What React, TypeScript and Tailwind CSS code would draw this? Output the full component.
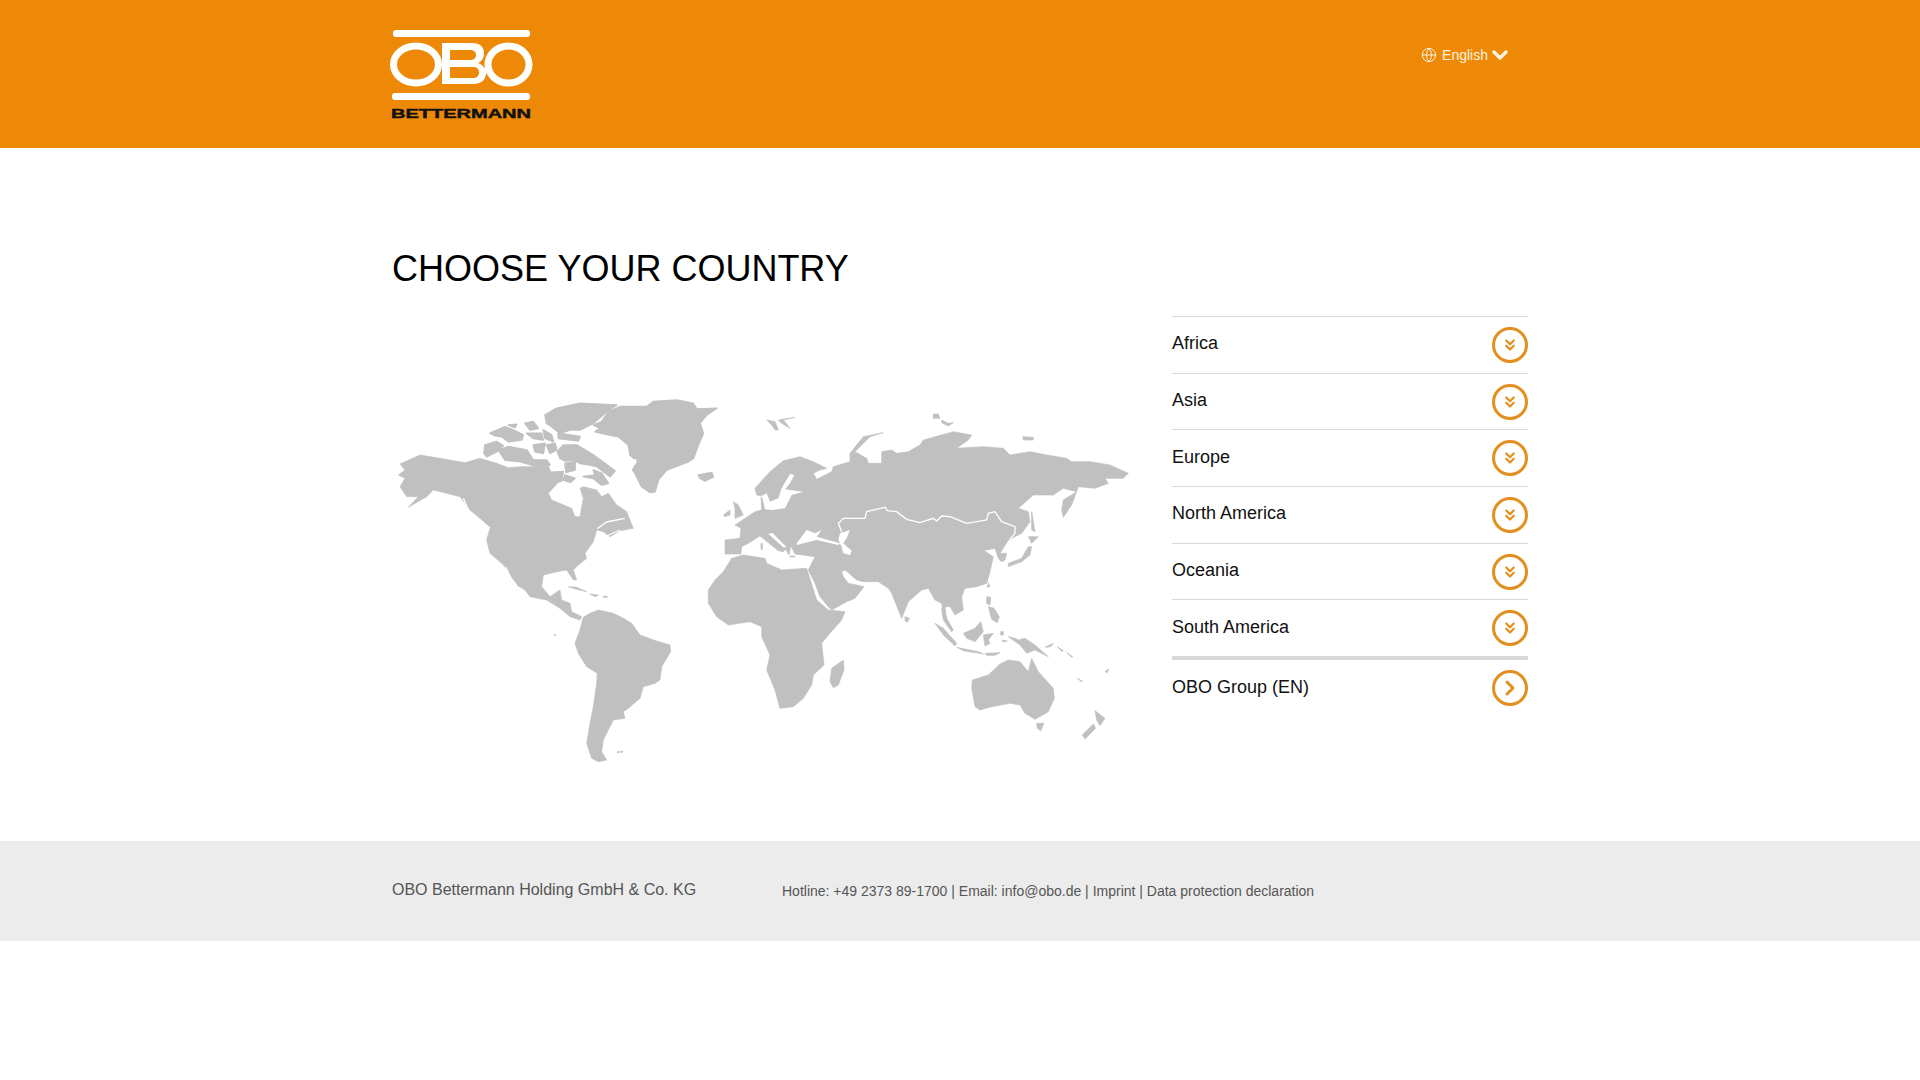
import React from 'react';
import { ChevronDown, ChevronRight, ChevronsDown, Globe } from 'lucide-react';

// map pieces, traced in groups with their own origin (page x, page y, scale 1/3)
const americas = [
    // north america
    '30,222 90,195 150,205 190,212 225,218 270,205 320,220 355,233 395,230 440,230 475,227 485,250 510,265 505,277 475,310 485,330 545,355 555,380 570,380 580,325 570,295 580,290 620,300 635,320 655,310 680,345 710,365 730,415 690,422 660,440 640,425 620,420 610,455 585,490 590,505 565,525 550,540 560,570 550,570 530,540 500,545 460,555 455,590 480,620 510,600 515,630 540,640 545,665 575,680 570,690 540,680 510,655 470,630 420,620 405,600 380,585 345,530 335,520 300,490 290,450 300,415 270,385 240,360 210,320 170,310 130,300 110,320 55,352 85,320 50,320 30,290 45,265 25,255 45,240',
    // caribbean
    '535,590 560,592 590,605 560,598',
    '600,612 625,615 615,620',
    '640,619 652,619 652,622 640,622',
    // south america
    '580,682 600,670 625,660 670,670 700,685 725,700 750,735 790,750 840,765 842,785 815,830 810,870 795,880 760,890 750,925 715,955 700,965 705,985 670,990 655,1020 640,1050 635,1085 650,1110 625,1115 605,1105 590,1060 600,1000 610,950 620,880 622,850 590,830 565,790 555,760 570,720',
    '682,1085 688,1084 688,1088 682,1088',
    '692,1084 698,1083 698,1087 692,1087',
    '492,733 497,735 496,739',
];

const arctic = [
    // baffin and around
    '232,170 250,150 290,150 340,180 405,228 390,245 350,215 330,210 300,205 280,195 255,198 240,190',
    '255,205 285,200 285,225 258,232',
    '340,225 365,235 385,265 365,270 340,250 310,245 345,240',
    '255,240 285,250 270,262 250,255',
    '215,232 250,230 245,258 228,262',
    // queen elizabeth islands
    '195,60 230,40 300,25 410,30 380,50 340,85 300,105 270,105 240,115 215,95 200,85',
    '235,115 300,125 295,138 235,130',
    '55,165 85,155 140,165 160,195 200,195 210,210 175,215 120,200 75,195',
    '15,150 50,140 70,152 50,170 20,185 12,175',
    '30,115 75,95 100,105 130,120 125,135 85,140 65,125 45,122',
    '135,85 160,80 175,100 150,105',
    '140,115 185,115 190,135 160,130',
    '190,105 215,120 220,140 195,130',
    '160,150 195,145 190,175 165,170',
    '200,150 225,145 230,165 210,175',
    '85,90 110,88 105,98',
    // greenland, iceland
    '340,90 365,80 385,50 420,35 500,35 520,20 590,15 640,25 650,42 710,40 680,60 660,85 670,115 655,150 640,190 625,200 600,210 560,225 535,255 525,290 510,292 485,275 465,235 458,225 472,200 450,180 445,150 415,125 380,118 345,110 360,100',
    '655,240 695,233 700,245 675,258 660,250',
];

const eurasia = [
    '75,492 75,450 120,445 123,415 105,405 165,365 185,360 183,322 190,318 170,315 165,295 210,245 250,212 300,200 340,215 380,235 360,240 340,250 350,268 395,245 400,230 450,215 450,190 490,140 550,128 510,140 465,185 500,205 505,220 545,220 545,185 575,180 590,190 625,185 660,165 670,150 760,125 815,135 805,150 770,175 850,170 910,175 930,195 990,185 1040,195 1100,205 1115,215 1170,215 1230,225 1285,250 1270,265 1215,265 1225,280 1185,295 1135,290 1115,345 1090,382 1085,360 1090,330 1130,305 1090,295 1060,315 1000,315 955,355 985,365 990,395 965,430 925,450 900,490 920,490 915,510 905,515 895,505 885,475 860,480 850,480 880,500 870,545 860,580 830,590 795,595 785,620 790,660 765,675 750,650 735,650 740,690 755,720 730,680 725,640 705,630 685,595 665,600 625,635 605,685 575,610 565,595 535,575 490,575 470,570 445,548 435,540 425,545 430,560 445,580 470,585 492,590 465,625 440,635 395,660 385,650 360,620 345,580 325,540 345,500 285,492 273,468 267,495 257,478 250,485 235,482 195,450 180,438 145,460 125,470 123,492 90,492',
    // africa
    '70,545 95,505 130,495 195,505 200,520 245,540 320,535 350,630 385,660 435,665 425,690 385,735 365,760 372,825 340,855 335,885 310,925 280,950 240,955 225,900 200,840 210,795 185,740 185,710 150,695 85,705 50,680 25,640 25,600 45,570',
    // madagascar, sri lanka
    '430,810 432,840 415,885 400,893 390,875 395,835',
    '615,680 628,685 622,697 615,692',
    // uk and ireland
    '100,335 115,345 130,375 105,385 105,355',
    '70,375 90,360 90,375 75,380',
    // corsica, sardinia, crete
    '183,460 187,460 187,478 183,478',
    '270,498 285,498 285,501 270,501',
    // japan, sakhalin, taiwan
    '925,520 965,505 985,470 995,470 990,495 965,515 925,530',
    '985,440 1015,440 995,460',
    '995,365 1005,425 995,420',
    '865,578 870,590 862,592',
    // svalbard and the far north
    '200,90 225,95 235,120 225,120 215,105',
    '235,90 285,82 250,90 270,115 245,100',
    '700,72 715,72 720,85 700,85',
    '725,90 745,100 760,98 745,108 725,98',
    '968,140 1000,142 1000,150 970,150',
];

const pacific = [
    // malay, sumatra, java
    '65,145 80,175 100,210 95,215 70,180',
    '45,190 70,205 110,250 105,258 70,225',
    '110,262 175,275 190,282 130,272',
    '195,280 240,278 225,286 200,286',
    // borneo, sulawesi, philippines
    '130,220 165,205 182,185 190,215 165,245 140,235',
    '190,225 220,220 205,240 210,250 195,258',
    '200,110 212,112 210,135 200,130',
    '205,140 222,145 238,170 232,188 215,178',
    '242,215 250,215 250,225 242,225',
    // new guinea and the east
    '265,230 285,235 295,240 315,235 345,255 385,290 345,270 320,280 300,255',
    '245,240 262,243 250,246',
    '375,262 400,250 392,260',
    '412,260 430,272 425,274',
    '440,278 458,290 455,292',
    '472,355 488,364 484,365',
    '555,335 566,327 562,338',
    // australia, tasmania, new zealand
    '157,360 205,345 240,312 265,300 300,305 325,335 335,295 355,335 400,385 403,415 385,455 345,478 315,460 300,435 270,430 215,440 180,450 165,440 155,385',
    '350,490 372,490 362,512 352,505',
    '525,452 555,475 540,497 530,480',
    '520,492 527,505 495,537 487,525',
];

const WorldMap: React.FC = () => (
    <svg viewBox="392 390 748 390" className="h-[390px] w-[748px] shrink-0">
        <g transform="translate(390 390) scale(0.33333)" fill="#c0c0c0" stroke="#c0c0c0" strokeWidth="2">
            {americas.map((p) => (
                <polygon key={p} points={p} />
            ))}
            {/* baja, west coast and st lawrence cuts */}
            <g fill="none" stroke="#fff" strokeWidth="4">
                <polyline points="348,532 362,565 380,585" />
                <polyline points="220,325 240,372" />
                <polyline points="268,388 300,415" />
                <polyline points="622,416 650,396 705,385" />
                <polyline points="650,438 690,420" />
            </g>
        </g>
        <g transform="translate(480 395) scale(0.33333)" fill="#c0c0c0" stroke="#c0c0c0" strokeWidth="5" strokeLinejoin="round">
            {arctic.map((p) => (
                <polygon key={p} points={p} />
            ))}
            <polygon points="448,195 468,192 470,205 452,205" fill="#fff" stroke="none" />
        </g>
        <g transform="translate(700 390) scale(0.33333)" fill="#c0c0c0" stroke="#c0c0c0" strokeWidth="2">
            {eurasia.map((p) => (
                <polygon key={p} points={p} />
            ))}
            {/* black sea, caspian */}
            <polygon points="290,460 320,420 345,430 365,420 350,440 420,460 415,465 350,450 290,465" fill="#fff" stroke="none" />
            <polygon points="420,430 450,420 440,445 430,460 455,482 450,495 430,490 425,470 415,450" fill="#fff" stroke="none" />
            {/* borders */}
            <polyline
                points="425,425 415,400 430,385 495,385 500,365 555,352 562,362 590,365 620,388 660,398 700,385 710,393 725,378 750,380 800,400 860,390 865,370 885,365 905,395 945,410 945,430 930,447"
                fill="none"
                stroke="#fff"
                strokeWidth="4"
            />
        </g>
        <g transform="translate(715 460) scale(0.33333)" fill="#fff">
            {/* baltic, adriatic */}
            <polygon points="140,108 155,100 165,125 190,115 200,85 225,42 238,45 225,70 210,88 265,95 230,105 210,145 170,150 150,148 145,125" />
            <polygon points="160,222 172,218 215,262 205,262" />
        </g>
        <g transform="translate(920 560) scale(0.33333)" fill="#c0c0c0" stroke="#c0c0c0" strokeWidth="2">
            {pacific.map((p) => (
                <polygon key={p} points={p} />
            ))}
        </g>
    </svg>
);

const Logo: React.FC = () => (
    <svg viewBox="390 28 145 92" className="h-[92px] w-[145px]">
        <rect x="393" y="30" width="137" height="7" rx="3" fill="#fff" />
        <rect x="392" y="93" width="138" height="7" rx="3" fill="#fff" />
        <ellipse cx="416" cy="64.5" rx="22.5" ry="18.5" fill="none" stroke="#fff" strokeWidth="7" />
        <ellipse cx="508.5" cy="64.5" rx="20.5" ry="18.5" fill="none" stroke="#fff" strokeWidth="7" />
        <path
            fillRule="evenodd"
            fill="#fff"
            d="M442 43h30c8 0 12 4 12 10 0 5-2 8-6 10 5 2 8 5 8 10 0 7-5 11-13 11h-31zM450 50v10h20c4 0 6-2 6-5s-2-5-6-5zM450 67v11h23c4 0 6-2 6-5.500s-2-5.500-6-5.500z"
        />
        <text
            x="391"
            y="117.500"
            textLength="140"
            lengthAdjust="spacingAndGlyphs"
            className="font-['Liberation_Sans',sans-serif] text-[12px] font-bold"
            fill="#111"
            stroke="#111"
            strokeWidth="0.4"
        >
            BETTERMANN
        </text>
    </svg>
);

const regions = ['Africa', 'Asia', 'Europe', 'North America', 'Oceania', 'South America'];

const App: React.FC = () => {
    return (
        <div className="min-h-screen bg-white font-['Liberation_Sans',Arial,sans-serif]">
            <header className="h-[148px] bg-[#ee8907]">
                <div className="mx-auto flex w-[1136px] justify-between">
                    <div className="-ml-[2px] pt-[28px]">
                        <Logo />
                    </div>
                    <div className="mr-[16px] mt-[47px] flex h-[16px] items-center gap-[5px] text-[14px] text-[#fff3df]">
                        <Globe size={16} strokeWidth={1.5} />
                        <span>English</span>
                        <ChevronDown size={24} strokeWidth={3.5} className="-ml-[5px]" />
                    </div>
                </div>
            </header>

            <main className="mx-auto w-[1136px] pb-[61px] pt-[100px]">
                <h1 className="text-[36px] leading-[41px] text-black">CHOOSE YOUR COUNTRY</h1>
                <div className="mt-[27px] flex justify-between">
                    <div className="mt-[74px] flex">
                        <WorldMap />
                    </div>
                    <div className="w-[356px]">
                        {regions.map((name) => (
                            <div
                                key={name}
                                className="flex h-[56.7px] items-center justify-between border-t border-[#d8d8d8] text-[18px] text-[#111]"
                            >
                                <span className="pb-[2px]">{name}</span>
                                <span className="flex h-[36px] w-[36px] items-center justify-center rounded-full border-[3px] border-[#e28f1f] text-[#e28f1f]">
                                    <ChevronsDown size={18} strokeWidth={3} />
                                </span>
                            </div>
                        ))}
                        <div className="flex h-[60px] items-center justify-between border-t-4 border-[#d8d8d8] text-[18px] text-[#111]">
                            <span className="pb-[2px]">OBO Group (EN)</span>
                            <span className="flex h-[36px] w-[36px] items-center justify-center rounded-full border-[3px] border-[#e28f1f] text-[#e28f1f]">
                                <ChevronRight size={24} strokeWidth={3} />
                            </span>
                        </div>
                    </div>
                </div>
            </main>

            <footer className="h-[100px] bg-[#ececec]">
                <div className="mx-auto flex w-[1136px] text-[#555]">
                    <div className="w-[390px] pt-[40px] text-[16px] leading-[18px]">OBO Bettermann Holding GmbH &amp; Co. KG</div>
                    <div className="pt-[42px] text-[14px] leading-[16px]">
                        Hotline: +49 2373 89-1700 | Email: info@obo.de | Imprint | Data protection declaration
                    </div>
                </div>
            </footer>
        </div>
    );
};

export default App;
